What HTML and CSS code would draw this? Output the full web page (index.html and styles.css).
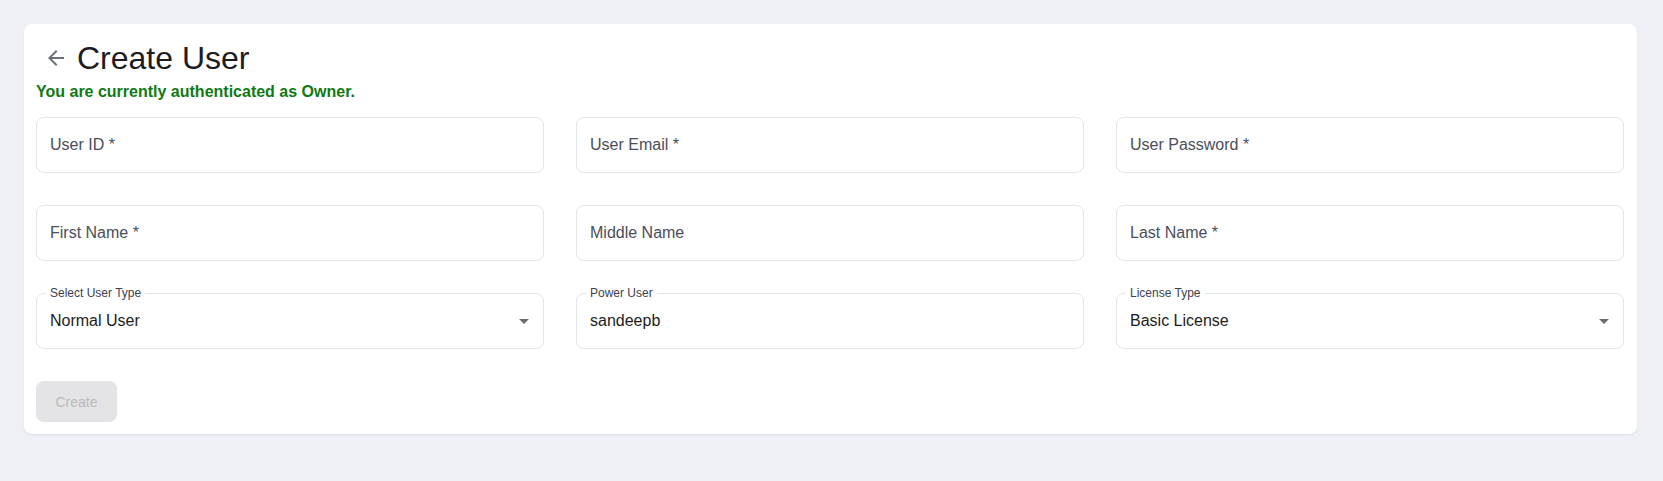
FILE: index.html
```html
<!DOCTYPE html>
<html lang="en">
<head>
<meta charset="utf-8">
<title>Create User</title>
<link rel="stylesheet" href="styles.css">
</head>
<body>
<main class="page">
  <section class="card">
    <header class="header">
      <button class="back" type="button" aria-label="Back">
        <svg viewBox="0 0 24 24" width="24" height="24"><path d="M20 11H7.83l5.59-5.59L12 4l-8 8 8 8 1.41-1.41L7.83 13H20v-2z"/></svg>
      </button>
      <h1 class="title">Create User</h1>
    </header>
    <p class="auth">You are currently authenticated as Owner.</p>
    <div class="grid">
      <div class="field"><span class="placeholder">User ID *</span></div>
      <div class="field"><span class="placeholder">User Email *</span></div>
      <div class="field"><span class="placeholder">User Password *</span></div>
      <div class="field"><span class="placeholder">First Name *</span></div>
      <div class="field"><span class="placeholder">Middle Name</span></div>
      <div class="field"><span class="placeholder">Last Name *</span></div>
      <div class="field filled">
        <span class="float">Select User Type</span>
        <span class="value">Normal User</span>
        <svg class="caret" viewBox="0 0 24 24" width="24" height="24"><path d="M7 10l5 5 5-5z"/></svg>
      </div>
      <div class="field filled">
        <span class="float">Power User</span>
        <span class="value">sandeepb</span>
      </div>
      <div class="field filled">
        <span class="float">License Type</span>
        <span class="value">Basic License</span>
        <svg class="caret" viewBox="0 0 24 24" width="24" height="24"><path d="M7 10l5 5 5-5z"/></svg>
      </div>
    </div>
    <div class="actions">
      <button class="create" type="button" disabled>Create</button>
    </div>
  </section>
</main>
</body>
</html>
```
FILE: styles.css
```css
* { box-sizing: border-box; }
html, body { margin: 0; padding: 0; }
body {
  background: #eff0f5;
  font-family: "Liberation Sans", Arial, sans-serif;
  color: #1f1f1f;
}
.page {
  padding: 24px 26px 40px 24px;
}
.card {
  background: #ffffff;
  border-radius: 8px;
  box-shadow: 0 1px 2px rgba(0, 0, 0, 0.08);
  padding: 12px 13px 12px 12px;
}
.header {
  display: flex;
  align-items: center;
  padding-top: 2px;
  height: 42px;
}
.back {
  width: 40px;
  height: 40px;
  padding: 8px;
  border: 0;
  background: transparent;
  display: flex;
  align-items: center;
  justify-content: center;
  cursor: pointer;
}
.back svg { fill: #6b6f7b; display: block; }
.title {
  margin: 0 0 0 1px;
  font-size: 32px;
  line-height: 40px;
  font-weight: 400;
  color: #1c1c22;
}
.auth {
  margin: 5px 0 0 0;
  font-size: 16px;
  line-height: 18px;
  font-weight: 700;
  color: #0f7a12;
}
.grid {
  margin-top: 16px;
  display: grid;
  grid-template-columns: repeat(3, 1fr);
  column-gap: 32px;
  row-gap: 32px;
}
.field {
  position: relative;
  height: 56px;
  border: 1px solid #e3e4e8;
  border-radius: 8px;
  display: flex;
  align-items: center;
  padding: 0 13px;
}
.placeholder {
  font-size: 16px;
  color: #4a4e5a;
}
.value {
  font-size: 16px;
  color: #1c1c1c;
}
.float {
  position: absolute;
  top: -8px;
  left: 9px;
  padding: 0 4px;
  background: #ffffff;
  font-size: 12px;
  line-height: 14px;
  color: #3d4150;
}
.caret {
  position: absolute;
  right: 7px;
  top: 15px;
  fill: #6b6b6b;
}
.actions {
  margin-top: 32px;
  display: flex;
}
.create {
  width: 81px;
  height: 41px;
  border: 0;
  border-radius: 8px;
  background: #e4e4e6;
  color: #b9b9bd;
  font-family: "Liberation Sans", Arial, sans-serif;
  font-size: 14px;
}
```
